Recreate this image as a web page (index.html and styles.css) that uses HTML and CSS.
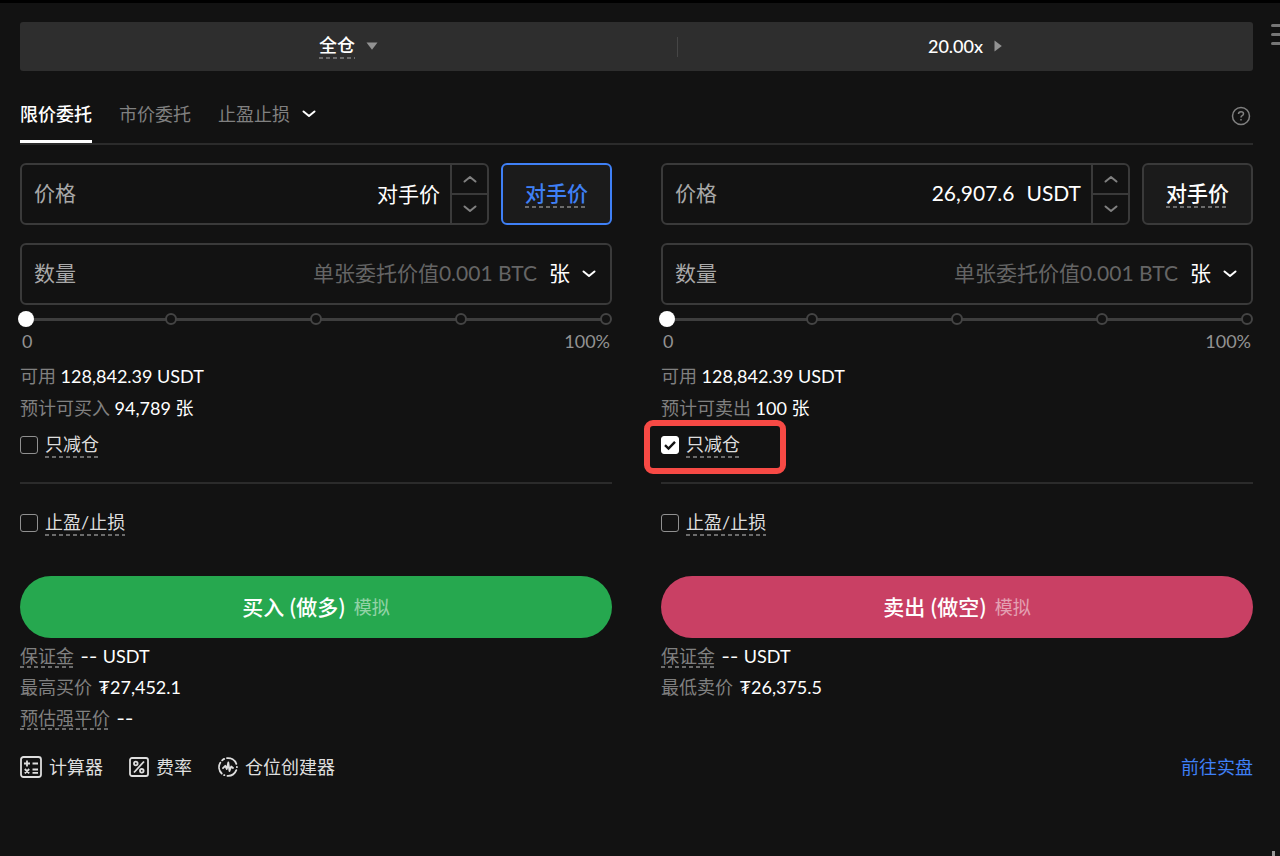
FILE: index.html
```html
<!DOCTYPE html>
<html lang="zh-CN">
<head>
<meta charset="utf-8">
<meta name="viewport" content="width=device-width, initial-scale=1">
<title>交易</title>
<link rel="stylesheet" href="styles.css">
</head>
<body>
<svg class="defs" width="0" height="0" aria-hidden="true">
  <symbol id="down" viewBox="0 0 14 8"><path d="M1.5 1.5 7 6 12.5 1.5" fill="none" stroke="currentColor" stroke-width="2" stroke-linecap="round" stroke-linejoin="round"/></symbol>
  <symbol id="up" viewBox="0 0 14 8"><path d="M1.5 6.5 7 2 12.5 6.5" fill="none" stroke="currentColor" stroke-width="2" stroke-linecap="round" stroke-linejoin="round"/></symbol>
</svg>
<main class="panel">
  <div class="mode-bar">
    <button class="mode" type="button"><span class="hint">全仓</span><svg width="12" height="8" viewBox="0 0 12 8" aria-hidden="true"><path d="M0.500 0.500h11L6 7.800z" fill="#929292"/></svg></button>
    <button class="mode" type="button">20.00x<svg width="8" height="12" viewBox="0 0 8 12" aria-hidden="true"><path d="M0.500 0.500v11L7.800 6z" fill="#929292"/></svg></button>
  </div>

  <nav class="tabs">
    <button class="tab active" type="button">限价委托</button>
    <button class="tab" type="button">市价委托</button>
    <button class="tab" type="button">止盈止损<svg class="tab-arrow" width="14" height="8"><use href="#down"/></svg></button>
    <button class="help" type="button" aria-label="帮助"><svg width="20" height="20" viewBox="0 0 20 20" fill="none" stroke="#808080" stroke-width="1.500"><circle cx="10" cy="10" r="8.500"/><path d="M7.500 8q0-2.300 2.500-2.300T12.500 7.800q0 1.200-1.300 1.800Q10 10.200 10 11.500M10 12.900v1.500"/></svg></button>
  </nav>

  <div class="columns">
    <section class="side">
      <div class="price-row">
        <div class="field">
          <label for="buy-price">价格</label>
          <input id="buy-price" type="text" value="对手价">
          <div class="stepper">
            <button type="button" aria-label="增加"><svg width="14" height="8"><use href="#up"/></svg></button>
            <button type="button" aria-label="减少"><svg width="14" height="8"><use href="#down"/></svg></button>
          </div>
        </div>
        <button class="match selected" type="button"><span class="hint">对手价</span></button>
      </div>
      <div class="field amount">
        <label for="buy-amount">数量</label>
        <input id="buy-amount" type="text" placeholder="单张委托价值0.001 BTC">
        <div class="unit"><select aria-label="单位"><option>张</option></select><svg width="14" height="8"><use href="#down"/></svg></div>
      </div>
      <div class="slider">
        <div class="ticks"><i></i><i></i><i></i><i></i><i></i></div>
        <input type="range" min="0" max="100" value="0" aria-label="买入比例">
      </div>
      <div class="scale"><span>0</span><span>100%</span></div>
      <p class="info">可用 <b>128,842.39 USDT</b></p>
      <p class="info">预计可买入 <b>94,789 张</b></p>
      <div class="check-row"><label class="check"><input type="checkbox"><span class="hint">只减仓</span></label></div>
      <hr>
      <div class="check-row tpsl"><label class="check"><input type="checkbox"><span class="hint">止盈/止损</span></label></div>
      <button class="submit buy" type="button">买入 (做多) <small>模拟</small></button>
      <p class="info detail"><span class="hint">保证金</span> <b><span class="empty">--</span> USDT</b></p>
      <p class="info detail">最高买价 <b>₮27,452.1</b></p>
      <p class="info detail"><span class="hint">预估强平价</span> <b><span class="empty">--</span></b></p>
    </section>

    <section class="side">
      <div class="price-row">
        <div class="field">
          <label for="sell-price">价格</label>
          <input id="sell-price" type="text" value="26,907.6">
          <span class="currency">USDT</span>
          <div class="stepper">
            <button type="button" aria-label="增加"><svg width="14" height="8"><use href="#up"/></svg></button>
            <button type="button" aria-label="减少"><svg width="14" height="8"><use href="#down"/></svg></button>
          </div>
        </div>
        <button class="match" type="button"><span class="hint">对手价</span></button>
      </div>
      <div class="field amount">
        <label for="sell-amount">数量</label>
        <input id="sell-amount" type="text" placeholder="单张委托价值0.001 BTC">
        <div class="unit"><select aria-label="单位"><option>张</option></select><svg width="14" height="8"><use href="#down"/></svg></div>
      </div>
      <div class="slider">
        <div class="ticks"><i></i><i></i><i></i><i></i><i></i></div>
        <input type="range" min="0" max="100" value="0" aria-label="卖出比例">
      </div>
      <div class="scale"><span>0</span><span>100%</span></div>
      <p class="info">可用 <b>128,842.39 USDT</b></p>
      <p class="info">预计可卖出 <b>100 张</b></p>
      <div class="check-row marked"><label class="check"><input type="checkbox" checked><span class="hint">只减仓</span></label></div>
      <hr>
      <div class="check-row tpsl"><label class="check"><input type="checkbox"><span class="hint">止盈/止损</span></label></div>
      <button class="submit sell" type="button">卖出 (做空) <small>模拟</small></button>
      <p class="info detail"><span class="hint">保证金</span> <b><span class="empty">--</span> USDT</b></p>
      <p class="info detail">最低卖价 <b>₮26,375.5</b></p>
    </section>
  </div>

  <footer class="tools">
    <a href="#calculator"><svg width="22" height="22" viewBox="0 0 22 22" fill="none" stroke="#dedede" stroke-width="1.800"><rect x="1" y="1" width="20" height="20" rx="2.500"/><path d="M4 7.500h6M7 4.500v6M12.500 7.500h5.500M12.500 13.500h5.500M12.500 16.800h5.500M4.800 13l4.400 4.400M9.200 13l-4.400 4.400"/></svg>计算器</a>
    <a href="#fees"><svg width="20" height="20" viewBox="0 0 20 20" fill="none" stroke="#dedede" stroke-width="1.800"><rect x="1" y="1" width="18" height="18" rx="2"/><path d="M15 4.500 5 15.500"/><circle cx="6.800" cy="6.500" r="1.800"/><circle cx="12.800" cy="13.800" r="1.800"/></svg>费率</a>
    <a href="#builder"><svg width="20" height="20" viewBox="0 0 20 20" fill="none" stroke="#dedede" stroke-width="1.800" stroke-linecap="round"><path d="M9 1.100A9 9 0 0 1 18.300 6.800M18.900 9.800v.4M18.300 13.200A9 9 0 0 1 9.500 18.900M6.400 18.200l-.3-.1M3.700 16.500A9 9 0 0 1 2.300 5.600M4.200 3.400A9 9 0 0 1 6.200 1.900"/><path d="M5 11.200 7.300 8.800 8.800 12 10.300 5.500 11.500 14 13.200 9.500 15 11" stroke-linejoin="round"/></svg>仓位创建器</a>
    <a class="live" href="#live">前往实盘</a>
  </footer>
  <button class="menu" type="button" aria-label="菜单"><i></i><i></i><i></i></button>
  <i class="corner"></i>
</main>
</body>
</html>
```
FILE: styles.css
```css
*, *::before, *::after { box-sizing: border-box; }
body {
  margin: 0;
  background: #121212;
  color: #fff;
  font: 18px/26px Lato, "Noto Sans CJK SC", sans-serif;
}
.defs { position: absolute; }
button, input, select {
  font: inherit;
  color: inherit;
  background: none;
  border: 0;
  padding: 0;
  margin: 0;
}
button { cursor: pointer; }
p { margin: 0; }
svg { flex: none; }

.panel {
  position: relative;
  min-height: 100vh;
  overflow: hidden;
  border-top: 3px solid #000;
  padding: 19px 27px 24px 20px;
}

.hint {
  display: inline-block;
  padding-bottom: 1px;
  background: repeating-linear-gradient(90deg, #6b6b6b 0 4px, transparent 4px 7px) left bottom / 100% 2px no-repeat;
}

.mode-bar {
  display: grid;
  grid-template-columns: 657fr 576fr;
  height: 49px;
  border-radius: 3px;
  background: #2e2e2e;
}
.mode {
  display: flex;
  align-items: center;
  justify-content: center;
  gap: 11px;
  padding-bottom: 2px;
  font-weight: 500;
}
.mode + .mode {
  background: linear-gradient(#464646, #464646) left center / 1px 20px no-repeat;
}

.tabs {
  display: flex;
  gap: 27px;
  height: 74px;
  padding-top: 16px;
  border-bottom: 2px solid #2b2b2b;
}
.tab {
  display: flex;
  align-items: center;
  color: #808080;
  border-bottom: 3px solid transparent;
}
.tab.active {
  color: #fff;
  font-weight: 500;
  border-color: #fff;
}
.tab-arrow { color: #fff; margin-left: 12px; }
.help { display: flex; align-items: center; margin-left: auto; padding: 2px 2px 0 0; }

.columns {
  display: grid;
  grid-template-columns: 1fr 1fr;
  gap: 49px;
  padding-top: 18px;
}
.price-row { display: flex; gap: 12px; }
.field {
  display: flex;
  flex: 1;
  min-width: 0;
  align-items: center;
  height: 62px;
  padding-left: 12px;
  border: 2px solid #3a3a3a;
  border-radius: 6px;
  font-size: 21px;
}
.field label { color: #a8a8a8; padding-bottom: 2px; }
.field input {
  flex: 1;
  min-width: 0;
  height: 100%;
  padding-bottom: 3px;
  text-align: right;
  outline: 0;
}
.field input::placeholder { color: #656565; opacity: 1; }
.currency { margin-left: 12px; padding-bottom: 2px; }
.stepper {
  display: grid;
  grid-template-rows: 28px 1fr;
  width: 37px;
  height: 100%;
  margin-left: 10px;
  border-left: 2px solid #3a3a3a;
  color: #808080;
}
.stepper button {
  display: flex;
  align-items: center;
  justify-content: center;
}
.stepper button + button { border-top: 2px solid #3a3a3a; }
.match {
  width: 111px;
  border: 2px solid #3a3a3a;
  border-radius: 6px;
  background: #1b1b1b;
  font-size: 21px;
  font-weight: 500;
}
.match .hint { padding-bottom: 2px; }
.match.selected { color: #3f80f6; border-color: #3f80f6; }
.amount { margin-top: 18px; padding-right: 14px; }
.unit { display: grid; align-items: center; margin-left: 12px; }
.unit select {
  grid-area: 1 / 1;
  appearance: none;
  padding: 0 26px 2px 0;
  outline: 0;
}
.unit option { background: #1b1b1b; }
.unit svg { grid-area: 1 / 1; justify-self: end; pointer-events: none; }

.slider { display: grid; align-items: center; height: 28px; }
.ticks {
  grid-area: 1 / 1;
  display: flex;
  justify-content: space-between;
  background: linear-gradient(#3e3e3e, #3e3e3e) center / calc(100% - 12px) 3px no-repeat;
}
.ticks i {
  width: 12px;
  height: 12px;
  border: 2px solid #444;
  border-radius: 50%;
  background: #121212;
}
.slider input {
  grid-area: 1 / 1;
  appearance: none;
  height: 16px;
  margin: 0 -2px;
}
.slider input::-webkit-slider-thumb {
  appearance: none;
  width: 16px;
  height: 16px;
  border-radius: 50%;
  background: #fff;
}
.scale {
  display: flex;
  justify-content: space-between;
  height: 26px;
  padding: 0 2px;
  margin-top: -5px;
  color: #929292;
}
.info { color: #808080; line-height: 32px; }
.scale + .info { margin-top: 6px; }
.info b { color: #fff; font-weight: 400; }
.check-row { display: flex; align-items: center; height: 43px; padding-bottom: 2px; position: relative; }
.check { display: flex; align-items: center; gap: 7px; color: #dedede; }
.check input {
  appearance: none;
  width: 18px;
  height: 18px;
  border: 1px solid #909090;
  border-radius: 3px;
}
.check input:checked {
  border-color: #fff;
  background: #fff url("data:image/svg+xml,%3Csvg xmlns='http://www.w3.org/2000/svg' viewBox='0 0 16 16'%3E%3Cpath d='M3 8.200 6.500 11.500 13 4.800' fill='none' stroke='%23121212' stroke-width='2.400'/%3E%3C/svg%3E") center / 16px no-repeat;
}
.marked::after {
  content: "";
  position: absolute;
  left: -17px;
  top: -4px;
  width: 142px;
  height: 54px;
  border: 6px solid #f74a45;
  border-radius: 9px;
  pointer-events: none;
}
hr { height: 2px; margin: 15px 0 0; border: 0; background: #2b2b2b; }
.tpsl { margin-top: 18px; }
.submit {
  display: flex;
  align-items: center;
  justify-content: center;
  gap: 8px;
  width: 100%;
  height: 62px;
  margin: 31px 0 3px;
  padding-bottom: 2px;
  border-radius: 31px;
  font-family: "Noto Sans CJK SC", sans-serif;
  font-size: 21px;
  font-weight: 500;
}
.submit small { font-size: 18px; font-weight: 400; opacity: .5; }
.buy { background: #26a84f; }
.sell { background: #c94064; }
.detail { line-height: 31px; }
.detail .hint { line-height: 22px; }
.detail b { margin-left: 2px; }
.empty { font-family: Inter, sans-serif; margin-right: 1px; }

.tools {
  display: flex;
  gap: 26px;
  padding-top: 20px;
}
.tools a {
  display: flex;
  align-items: center;
  gap: 7px;
  color: #dedede;
  text-decoration: none;
}
.tools .live { margin-left: auto; color: #3f80f6; }

.menu {
  position: absolute;
  top: 21px;
  right: -11px;
  display: grid;
  gap: 6px;
  width: 20px;
}
.menu i { height: 3px; border-radius: 2px; background: #777; }
.corner {
  position: absolute;
  right: 5px;
  bottom: 0;
  width: 3px;
  height: 5px;
  background: #999;
}
```
